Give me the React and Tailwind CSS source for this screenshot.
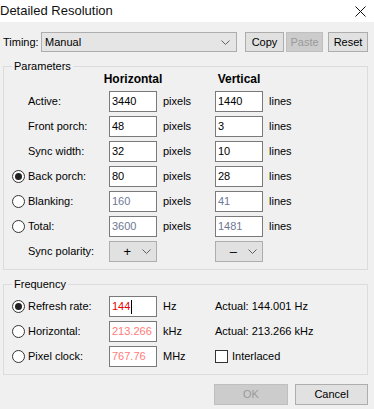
import React from 'react'

const inputBase = 'h-[21px] border border-[#7a7a7a] bg-white pl-[2px] flex items-center leading-none'

function Radio({ checked }) {
  return (
    <div className="w-[13px] h-[13px] rounded-full border border-[#333333] bg-white flex items-center justify-center">
      {checked && <div className="w-[7px] h-[7px] rounded-full bg-[#222222]" />}
    </div>
  )
}

function Chevron() {
  return (
    <svg width="9" height="5" viewBox="0 0 9 5" className="shrink-0">
      <path d="M0.5 0.5 L4.5 4.5 L8.5 0.5" fill="none" stroke="#606060" strokeWidth="1" />
    </svg>
  )
}

function Btn({ children, disabled, className }) {
  return (
    <div
      className={`h-[20px] flex items-center justify-center border ${
        disabled ? 'bg-[#cccccc] border-[#bfbfbf] text-[#9a9a9a]' : 'bg-[#e1e1e1] border-[#adadad] text-black'
      } ${className}`}
    >
      {children}
    </div>
  )
}

const rows = [
  { label: 'Active:', h: '3440', v: '1440' },
  { label: 'Front porch:', h: '48', v: '3' },
  { label: 'Sync width:', h: '32', v: '10' },
  { label: 'Back porch:', h: '80', v: '28', radio: true, checked: true },
  { label: 'Blanking:', h: '160', v: '41', radio: true, dim: true },
  { label: 'Total:', h: '3600', v: '1481', radio: true, dim: true },
]

const freq = [
  { label: 'Refresh rate:', value: '144', unit: 'Hz', checked: true, actual: 'Actual: 144.001 Hz' },
  { label: 'Horizontal:', value: '213.266', unit: 'kHz', actual: 'Actual: 213.266 kHz' },
  { label: 'Pixel clock:', value: '767.76', unit: 'MHz', interlaced: true },
]

export default function App() {
  return (
    <div className="w-[374px] h-[409px] overflow-hidden bg-[#f0f0f0] text-[11px] text-black font-['Liberation_Sans',Arial,sans-serif]">
      <div className="h-[22px] bg-white flex items-center justify-between">
        <span className="ml-[0px] text-[13px] text-[#111]">Detailed Resolution</span>
        <svg width="11" height="11" viewBox="0 0 11 11" className="mr-[8px]">
          <path d="M0.5 0.5 L10.5 10.5 M10.5 0.5 L0.5 10.5" stroke="#111" strokeWidth="1" />
        </svg>
      </div>

      <div className="mt-[10px] flex items-center h-[20px]">
        <span className="ml-[3px] w-[38px]">Timing:</span>
        <div className="w-[196px] h-[20px] border border-[#adadad] bg-[#e5e5e5] flex items-center justify-between pl-[3px] pr-[6px]">
          <span>Manual</span>
          <Chevron />
        </div>
        <Btn className="ml-[8px] w-[39px]">Copy</Btn>
        <Btn disabled className="ml-[2px] w-[37px]">Paste</Btn>
        <Btn className="ml-[5px] w-[40px]">Reset</Btn>
      </div>

      <fieldset className="mt-[8px] ml-[3px] w-[365px] border border-[#dcdcdc] pl-[8px] pb-[7px]">
        <legend className="ml-[0px] px-[2px] leading-[13px]">Parameters</legend>
        <div className="grid grid-cols-[16px_81px_48px_58px_48px_1fr] h-[13px] font-bold text-[12px] leading-[13px]">
          <div />
          <div />
          <div className="flex justify-center whitespace-nowrap">Horizontal</div>
          <div />
          <div className="flex justify-center whitespace-nowrap">Vertical</div>
        </div>
        <div className="mt-[5px] grid grid-cols-[16px_81px_48px_58px_48px_1fr] gap-y-[4px] items-center">
          {rows.map(r => (
            <React.Fragment key={r.label}>
              <div>{r.radio && <Radio checked={r.checked} />}</div>
              <div>{r.label}</div>
              <div className={`${inputBase} ${r.dim ? 'text-[#6d7896]' : ''}`}>{r.h}</div>
              <div className="pl-[6px]">pixels</div>
              <div className={`${inputBase} ${r.dim ? 'text-[#6d7896]' : ''}`}>{r.v}</div>
              <div className="pl-[6px]">lines</div>
            </React.Fragment>
          ))}
          <div />
          <div>Sync polarity:</div>
          <div className="h-[21px] border border-[#adadad] bg-[#e1e1e1] flex items-center justify-end pr-[5px] gap-[11px]">
            <span className="text-[13px] leading-none">+</span>
            <Chevron />
          </div>
          <div />
          <div className="h-[21px] border border-[#adadad] bg-[#e1e1e1] flex items-center justify-end pr-[5px] gap-[11px]">
            <span className="text-[13px] leading-none">–</span>
            <Chevron />
          </div>
          <div />
        </div>
      </fieldset>

      <fieldset className="mt-[8px] ml-[3px] w-[365px] border border-[#dcdcdc] pl-[8px] pb-[7px]">
        <legend className="ml-[0px] px-[2px] leading-[13px]">Frequency</legend>
        <div className="mt-[5px] grid grid-cols-[16px_81px_48px_58px_1fr] gap-y-[4px] items-center">
          {freq.map(f => (
            <React.Fragment key={f.label}>
              <div>
                <Radio checked={f.checked} />
              </div>
              <div>{f.label}</div>
              <div className={`${inputBase} ${f.checked ? 'text-[#e60000]' : 'text-[#ff7a7a]'}`}>
                {f.value}
                {f.checked && <span className="ml-[1px] w-[1px] h-[14px] bg-black" />}
              </div>
              <div className="pl-[6px]">{f.unit}</div>
              <div>
                {f.actual}
                {f.interlaced && (
                  <div className="flex items-center gap-[4px]">
                    <div className="w-[13px] h-[13px] border border-[#333333] bg-white" />
                    <span>Interlaced</span>
                  </div>
                )}
              </div>
            </React.Fragment>
          ))}
        </div>
      </fieldset>

      <div className="mt-[9px] flex justify-end pr-[6px] gap-[7px]">
        <Btn disabled className="w-[74px] h-[21px]">OK</Btn>
        <Btn className="w-[73px] h-[21px]">Cancel</Btn>
      </div>
    </div>
  )
}
